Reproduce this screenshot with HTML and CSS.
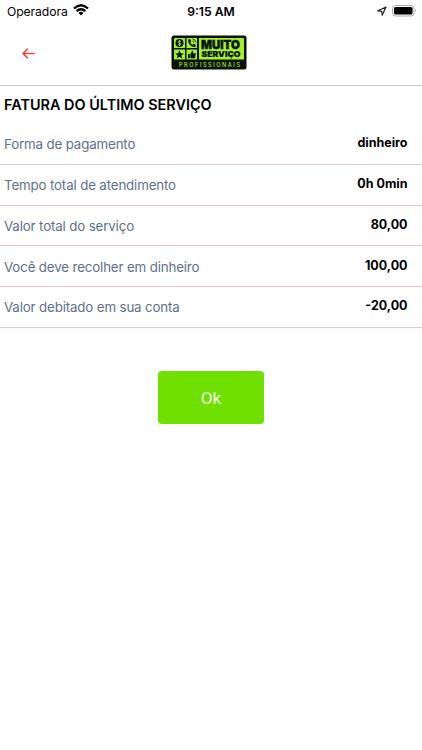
FILE: index.html
```
<!DOCTYPE html>
<html lang="pt-BR">
<head>
<meta charset="utf-8">
<title>Fatura do último serviço</title>
<link rel="stylesheet" href="styles.css">
</head>
<body>
<div class="status">
  <div class="carrier"><span>Operadora</span>
    <svg width="16" height="12" viewBox="0 0 16 12" fill="none" stroke="#000" stroke-width="2.3"><path d="M1 4.5Q8-1.9 15 4.5M3.6 7.2Q8 3.2 12.4 7.2"/><path d="M5.5 8.9Q8 6.8 10.5 8.9L8 11.5Z" fill="#000" stroke="none"/></svg>
  </div>
  <div class="time">9:15 AM</div>
  <div class="indicators">
    <svg width="10" height="10" viewBox="0 0 10 10" fill="none" stroke="#222" stroke-width="1.2" stroke-linejoin="round"><path d="M9 1L.8 4.8L4.7 5.3L5.2 9.2Z"/></svg>
    <svg width="26" height="12" viewBox="0 0 26 12"><rect x=".5" y=".5" width="21.5" height="10.5" rx="3" fill="#fff" stroke="#aaa"/><rect x="2" y="2" width="18.5" height="7.5" rx="1.5"/><path d="M23.3 4Q24.8 5.7 23.3 7.4Z" fill="#999"/></svg>
  </div>
</div>
<header class="header">
  <svg class="back" width="13" height="11" viewBox="0 0 13 11" fill="none" stroke="#f04444" stroke-width="1.6" stroke-linecap="round" stroke-linejoin="round"><path d="M12 5.5H1M5.3 1.2L1 5.5L5.3 9.8"/></svg>
  <svg class="logo" width="76" height="35" viewBox="0 0 76 35">
    <rect x=".5" y=".5" width="75" height="34" rx="2.5" fill="#0a1205"/>
    <path fill="#a5f028" d="M4 3H14V13H3V4Q3 3 4 3ZM15.5 3H26V13H15.5ZM3 14.5H14V24.5H3ZM15.5 14.5H26V24.5H15.5ZM28 3H72Q73 3 73 4V24.5H28Z"/>
    <circle cx="8.5" cy="8" r="4" fill="#0a1205"/>
    <path d="M10 6.5Q8.5 5.3 7.4 6.4Q6.7 7.5 8.5 8Q10.3 8.5 9.5 9.6Q8.5 10.5 7 9.5M8.5 5V11" fill="none" stroke="#a5f028" stroke-width=".8"/>
    <path d="M17.2 4.5L19 4L20.3 6.5L19.2 7.6Q20 9 21.5 9.7L22.6 8.7L24.9 10L24.3 12Q21 12.3 18.7 9.7Q16.7 7.3 17.2 4.5Z" fill="#0a1205"/>
    <path d="M21.5 4Q24.7 4.3 24.8 7.4M21.5 6Q22.8 6.2 22.9 7.5" fill="none" stroke="#0a1205" stroke-width=".8"/>
    <path d="M8.5 15.3L9.7 18.2L12.8 18.4L10.4 20.4L11.2 23.4L8.5 21.8L5.8 23.4L6.6 20.4L4.2 18.4L7.3 18.2Z" fill="#0a1205"/>
    <path d="M17 19H18.8V23.2H17ZM19.4 19L21.2 15.7Q22.6 16 22 18.3H24.5Q25.2 19 24.6 19.8L24 23.2H20.2L19.4 22.7Z" fill="#0a1205"/>
    <text class="brand-muito" x="30" y="14" textLength="39" lengthAdjust="spacingAndGlyphs">MUITO</text>
    <text class="brand-servico" x="30.5" y="22" textLength="39" lengthAdjust="spacingAndGlyphs">SERVIÇO</text>
    <text class="brand-sub" x="8" y="31.7" textLength="61">PROFISSIONAIS</text>
  </svg>
</header>
<main>
  <h1>FATURA DO ÚLTIMO SERVIÇO</h1>
  <dl class="invoice">
    <div class="row"><dt>Forma de pagamento</dt><dd>dinheiro</dd></div>
    <div class="row"><dt>Tempo total de atendimento</dt><dd>0h 0min</dd></div>
    <div class="row"><dt>Valor total do serviço</dt><dd>80,00</dd></div>
    <div class="row"><dt>Você deve recolher em dinheiro</dt><dd>100,00</dd></div>
    <div class="row"><dt>Valor debitado em sua conta</dt><dd>-20,00</dd></div>
  </dl>
  <button class="ok" type="button">Ok</button>
</main>
</body>
</html>
```
FILE: styles.css
```
* { box-sizing: border-box; }
body { margin: 0; background: #fff; color: #000; font-family: Inter, "Liberation Sans", sans-serif; }
.status { display: grid; grid-template-columns: 1fr auto 1fr; align-items: center; height: 22px; padding: 0 5px 0 7px; font-size: 12.2px; }
.carrier { display: flex; align-items: center; gap: 5px; letter-spacing: -.1px; }
.carrier svg { margin-bottom: 2px; }
.time { font-weight: 600; font-size: 12.2px; margin-right: 2px; }
.indicators { display: flex; align-items: center; justify-content: flex-end; gap: 5px; margin-right: -1px; }
.header { display: grid; grid-template-columns: 1fr auto 1fr; height: 64px; border-bottom: 1px solid #ccc; padding: 13px 4px 0 0; }
.back { margin: 13px 0 0 22px; }
.brand-muito { font: 900 12px Inter, sans-serif; fill: #0a1205; stroke: #0a1205; stroke-width: .4px; }
.brand-servico { font: 900 8px Inter, sans-serif; fill: #0a1205; stroke: #0a1205; stroke-width: .2px; }
.brand-sub { font: 500 5.6px Inter, sans-serif; fill: #a5f028; }
h1 { margin: 0; height: 37px; padding: 9px 4px 0; font-size: 14.4px; line-height: 20px; font-weight: 600; letter-spacing: .02px; }
.invoice { margin: 0; padding-top: 1px; }
.row { display: flex; justify-content: space-between; height: 40.8px; border-bottom: 1px solid #f8bfd0; padding: 10.2px 14.5px 0 4px; }
dt { font-size: 13.3px; line-height: 20px; letter-spacing: -.14px; color: #5d708c; }
dd { margin: 0; font-size: 12.5px; line-height: 17px; font-weight: 650; }
.ok { display: block; width: 106px; height: 53px; margin: 43px auto 0; padding: 2px 0 0; border: 0; border-radius: 4px; background: #70e000; color: #f4ffea; font: 400 17.2px Roboto, sans-serif; }
```
